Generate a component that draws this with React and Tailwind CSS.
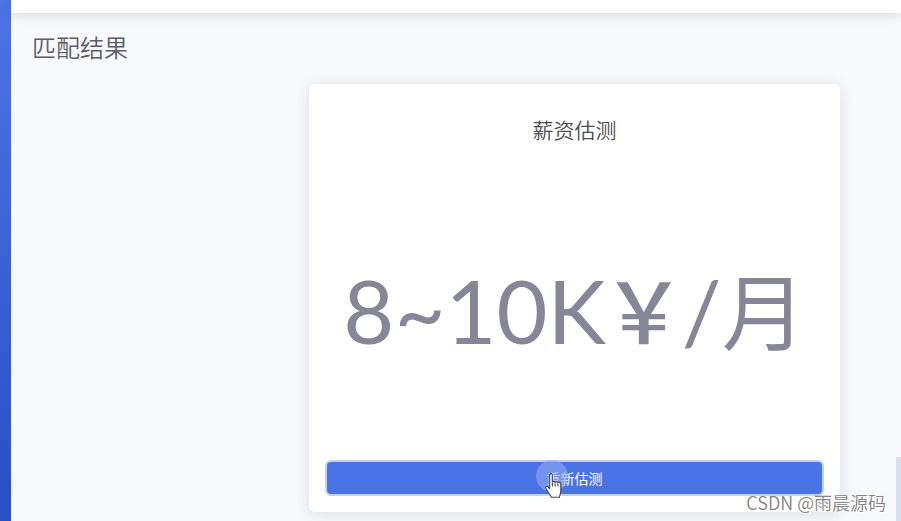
import React from "react";

function HandCursor() {
  return (
    <svg
      viewBox="0 0 18 26"
      className="pointer-events-none absolute top-3 left-2 h-7 w-5"
      aria-hidden="true"
    >
      <path
        d="M5 2.5c0-1.300 2.400-1.300 2.400 0v7c0-1.200 2.600-1.100 2.600.3 0-1.200 2.600-1 2.600.4 0-1.100 2.700-.8 2.700.8v6.500c0 2.500-1 4-1.300 6H6.500c-.4-2-3.500-5-5-8.500-.7-1.700 1-2.200 2-1.200L5 15.500z"
        fill="#fff"
        stroke="#444"
        strokeWidth="1"
        strokeLinejoin="round"
      />
      <path d="M7.500 10v3.500M10 10.500v3M12.600 11v2.500" stroke="#444" strokeWidth="1" fill="none" />
    </svg>
  );
}

function SalaryCard() {
  return (
    <section className="flex flex-col rounded-md bg-white px-4 pt-8 pb-4 shadow-[0_2px_16px_rgba(58,59,69,0.15)]">
      <h2 className="-mt-px text-center text-[21px] leading-7 font-[350] text-[#4a4a4f]">薪资估测</h2>
      <p className="mt-[103px] mb-[86px] flex h-32 items-center justify-center font-['Lato','Noto_Sans_CJK_SC',sans-serif] text-[88px] leading-none whitespace-nowrap text-[#858796]">
        <span>
          8~10K<span className="-mx-1 text-[84px] font-medium">￥</span>/
          <span className="text-[84px]">月</span>
        </span>
      </p>
      <div className="relative">
        <button
          type="button"
          className="block h-9 w-full rounded-md border-2 border-[#c3d0f7] bg-[#4a74e6] text-center text-sm leading-8 text-white"
        >
          重新估测
        </button>
        <div className="pointer-events-none absolute top-0 left-[211px] h-8 w-8 rounded-full bg-[#8fa9f2]/60">
          <HandCursor />
        </div>
      </div>
    </section>
  );
}

export default function App() {
  return (
    <div className="relative flex min-h-screen overflow-hidden bg-[#f8f9fc] font-['Noto_Sans_CJK_SC',sans-serif]">
      <aside className="w-[11px] shrink-0 bg-linear-to-b from-[#4b74e6] to-[#2450c8]" />
      <div className="min-w-0 flex-1">
        <header className="h-[13px] bg-white shadow-[0_2px_12px_rgba(58,59,69,0.18)]" />
        <main>
          <h1 className="px-[21px] pt-[18px] text-2xl leading-8 font-[350] text-[#5a5c69]">匹配结果</h1>
          <div className="mt-[21px] pr-[61px] pb-2 pl-[298px]">
            <SalaryCard />
          </div>
        </main>
      </div>
      <div className="absolute right-0 bottom-0 h-16 w-[5px] bg-[#dadeeb]" />
      <span className="absolute right-[15px] bottom-[5px] text-lg leading-7 font-[350] text-[#858585] [text-shadow:1px_1px_0_#fff]">
        CSDN @雨晨源码
      </span>
    </div>
  );
}
